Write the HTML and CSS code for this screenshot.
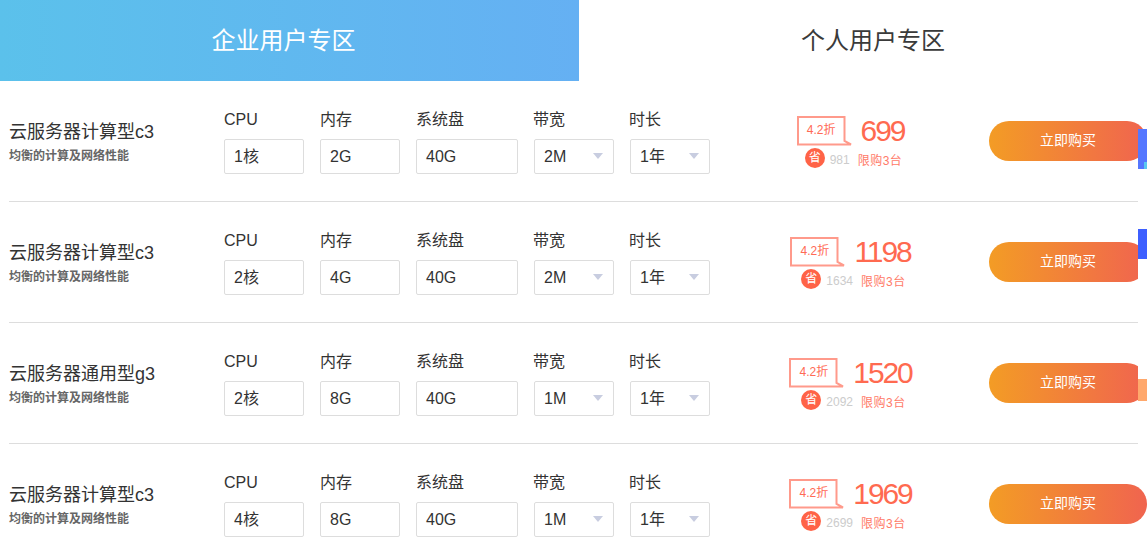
FILE: index.html
```html
<!DOCTYPE html>
<html lang="zh-CN">
<head>
<meta charset="utf-8">
<title>云服务器</title>
<link rel="stylesheet" href="styles.css">
</head>
<body>
<div class="tabs">
  <div class="tab tab-active">企业用户专区</div>
  <div class="tab tab-plain">个人用户专区</div>
</div>
<div class="list">
  <div class="row">
    <div class="info"><div class="name">云服务器计算型c3</div><div class="desc">均衡的计算及网络性能</div></div>
    <div class="fields">
      <div class="field"><div class="label">CPU</div><div class="box">1核</div></div>
      <div class="field"><div class="label">内存</div><div class="box">2G</div></div>
      <div class="field wide"><div class="label">系统盘</div><div class="box">40G</div></div>
      <div class="field"><div class="label">带宽</div><div class="box select">2M</div></div>
      <div class="field"><div class="label">时长</div><div class="box select">1年</div></div>
    </div>
    <div class="price">
      <div class="price-top">
        <div class="bubble"><svg class="bubble-bg" width="55" height="30" viewBox="0 0 55 30"><path d="M1 1H47.500V25L54 28.500H1Z" fill="none" stroke="#ff9a8b" stroke-width="2"/></svg><span class="bubble-text">4.2折</span></div>
        <div class="amount">699</div>
      </div>
      <div class="price-bottom"><span class="save">省</span><span class="saved">981</span><span class="limit">限购3台</span></div>
    </div>
    <div class="buy">立即购买</div>
  </div>
  <div class="row">
    <div class="info"><div class="name">云服务器计算型c3</div><div class="desc">均衡的计算及网络性能</div></div>
    <div class="fields">
      <div class="field"><div class="label">CPU</div><div class="box">2核</div></div>
      <div class="field"><div class="label">内存</div><div class="box">4G</div></div>
      <div class="field wide"><div class="label">系统盘</div><div class="box">40G</div></div>
      <div class="field"><div class="label">带宽</div><div class="box select">2M</div></div>
      <div class="field"><div class="label">时长</div><div class="box select">1年</div></div>
    </div>
    <div class="price">
      <div class="price-top">
        <div class="bubble"><svg class="bubble-bg" width="55" height="30" viewBox="0 0 55 30"><path d="M1 1H47.500V25L54 28.500H1Z" fill="none" stroke="#ff9a8b" stroke-width="2"/></svg><span class="bubble-text">4.2折</span></div>
        <div class="amount">1198</div>
      </div>
      <div class="price-bottom"><span class="save">省</span><span class="saved">1634</span><span class="limit">限购3台</span></div>
    </div>
    <div class="buy">立即购买</div>
  </div>
  <div class="row">
    <div class="info"><div class="name">云服务器通用型g3</div><div class="desc">均衡的计算及网络性能</div></div>
    <div class="fields">
      <div class="field"><div class="label">CPU</div><div class="box">2核</div></div>
      <div class="field"><div class="label">内存</div><div class="box">8G</div></div>
      <div class="field wide"><div class="label">系统盘</div><div class="box">40G</div></div>
      <div class="field"><div class="label">带宽</div><div class="box select">1M</div></div>
      <div class="field"><div class="label">时长</div><div class="box select">1年</div></div>
    </div>
    <div class="price">
      <div class="price-top">
        <div class="bubble"><svg class="bubble-bg" width="55" height="30" viewBox="0 0 55 30"><path d="M1 1H47.500V25L54 28.500H1Z" fill="none" stroke="#ff9a8b" stroke-width="2"/></svg><span class="bubble-text">4.2折</span></div>
        <div class="amount">1520</div>
      </div>
      <div class="price-bottom"><span class="save">省</span><span class="saved">2092</span><span class="limit">限购3台</span></div>
    </div>
    <div class="buy">立即购买</div>
  </div>
  <div class="row">
    <div class="info"><div class="name">云服务器计算型c3</div><div class="desc">均衡的计算及网络性能</div></div>
    <div class="fields">
      <div class="field"><div class="label">CPU</div><div class="box">4核</div></div>
      <div class="field"><div class="label">内存</div><div class="box">8G</div></div>
      <div class="field wide"><div class="label">系统盘</div><div class="box">40G</div></div>
      <div class="field"><div class="label">带宽</div><div class="box select">1M</div></div>
      <div class="field"><div class="label">时长</div><div class="box select">1年</div></div>
    </div>
    <div class="price">
      <div class="price-top">
        <div class="bubble"><svg class="bubble-bg" width="55" height="30" viewBox="0 0 55 30"><path d="M1 1H47.500V25L54 28.500H1Z" fill="none" stroke="#ff9a8b" stroke-width="2"/></svg><span class="bubble-text">4.2折</span></div>
        <div class="amount">1969</div>
      </div>
      <div class="price-bottom"><span class="save">省</span><span class="saved">2699</span><span class="limit">限购3台</span></div>
    </div>
    <div class="buy">立即购买</div>
  </div>
</div>
<div class="side-top"></div>
<div class="side-panel"><div class="side-blue"></div><div class="side-gap"></div><div class="side-orange"></div></div>
</body>
</html>
```
FILE: styles.css
```css
* { box-sizing: border-box; }
html, body { margin: 0; height: 550px; overflow: hidden; background: #fff; }
body { font-family: "Liberation Sans", "Noto Sans CJK SC", sans-serif; color: #333; position: relative; }
.tabs { display: flex; height: 81px; }
.tab { flex: 1; line-height: 81px; text-align: center; font-size: 24px; color: #3a3a3a; }
.tab-active { flex: 0 0 579px; padding-right: 12px; color: #fff; background: linear-gradient(90deg, #5bc1eb, #65b0f3); }
.tab-plain { padding-left: 20px; }
.list { margin-left: 9px; width: 1129px; }
.row { display: flex; height: 121px; border-bottom: 1px solid #ddd; }
.row:last-child { border-bottom: 0; }
.row > * { flex-shrink: 0; }
.info { width: 215px; padding-top: 40px; }
.name { font-size: 18px; line-height: 22px; color: #333; }
.desc { font-size: 12px; line-height: 20px; margin-top: 3px; font-weight: 700; color: #666; }
.fields { display: flex; gap: 16px; width: 486px; padding-top: 29px; }
.field { width: 80px; }
.wide { width: 101px; }
.wide .box { width: 102px; }
.label { font-size: 16px; line-height: 20px; margin-bottom: 9px; color: #333; }
.box { position: relative; height: 35px; line-height: 33px; padding-left: 9px; border: 1px solid #ddd; border-radius: 2px; font-size: 16px; color: #333; }
.select { width: 80px; margin-left: 1px; }
.select::after { content: ""; position: absolute; right: 10px; top: 13px; border-style: solid; border-width: 6px 5px 0; border-color: #c8cde0 transparent transparent; }
.price { width: 279px; display: flex; flex-direction: column; align-items: center; padding: 35px 0 0 2px; }
.price-top { display: flex; align-items: flex-start; gap: 9px; height: 30px; }
.bubble { position: relative; width: 55px; height: 30px; }
.bubble-bg { position: absolute; left: 0; top: 0; }
.bubble-text { position: absolute; left: 0; width: 49px; top: 0; text-align: center; font-size: 12px; line-height: 29px; color: #ff6a55; }
.amount { font-size: 30px; line-height: 30px; letter-spacing: -2.100px; color: #ff6a50; }
.price-bottom { display: flex; align-items: center; height: 20px; margin-top: 2px; margin-left: 6px; font-size: 12px; }
.save { width: 20px; height: 20px; border-radius: 50%; background: #ff6347; color: #fff; text-align: center; line-height: 20px; }
.saved { margin-left: 5px; padding-top: 3px; color: #ccc; }
.limit { margin-left: 8px; padding-top: 3px; letter-spacing: 0.500px; color: #ff7a68; }
.buy { width: 158px; height: 40px; margin-top: 40px; line-height: 38px; text-align: center; font-size: 14px; color: #fff; border-radius: 20px; background: linear-gradient(90deg, #f39c25, #f0644f); }
.side-top { position: absolute; left: 1138px; top: 129px; width: 9px; height: 40px; background: linear-gradient(#5577ff 0 33px, transparent 33px), linear-gradient(90deg, #5577ff 0 6px, #5ac8f0 6px); }
.side-panel { position: absolute; left: 1138px; top: 229px; width: 9px; height: 174px; background: #fff; }
.side-blue { height: 30px; background: #3d5fff; }
.side-gap { height: 120px; }
.side-orange { height: 22px; background: #ffa86c; }
```
